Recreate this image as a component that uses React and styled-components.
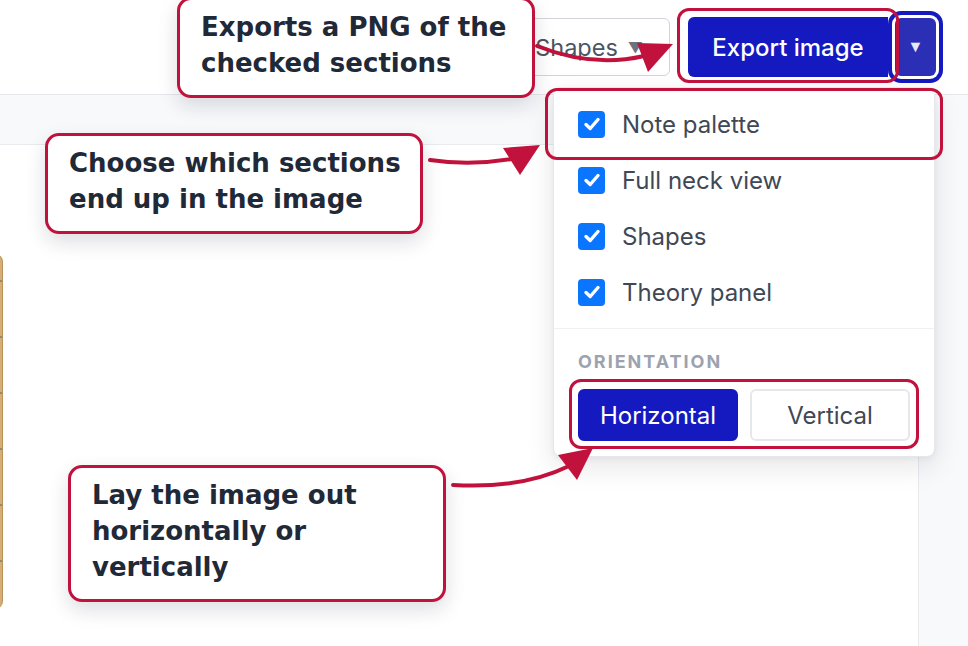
import styled, { createGlobalStyle } from "styled-components";

const GlobalStyle = createGlobalStyle`
  html, body {
    margin: 0;
    padding: 0;
    background: #f8f9fb;
    font-family: Inter, "Noto Sans", sans-serif;
    overflow: hidden;
  }
  * {
    box-sizing: border-box;
  }
`;

const RED = "#c0123c";
const BLUE = "#1419c0";

const Page = styled.div`
  position: relative;
  width: 968px;
  height: 646px;
  overflow: hidden;
  background: #f8f9fb;
`;

const Header = styled.header`
  height: 95px;
  background: #fff;
  border-bottom: 1px solid #e5e7eb;
  display: flex;
  align-items: center;
  justify-content: flex-end;
  padding-right: 32px;
  gap: 18px;
`;

const MenuButton = styled.button`
  height: 58px;
  padding: 0 26px 0 14px;
  border: 1px solid #d1d5db;
  border-radius: 6px;
  background: #fff;
  color: #4b5563;
  font-family: Inter, sans-serif;
  font-size: 23.5px;
  display: flex;
  align-items: center;
  gap: 10px;

  span {
    font-size: 15px;
    color: #6b7280;
  }
`;

const Split = styled.div`
  display: flex;
  align-items: center;
`;

const ExportButton = styled.button`
  width: 200px;
  height: 60px;
  border: none;
  border-radius: 6px 0 0 6px;
  background: ${BLUE};
  color: #fff;
  font-family: Inter, sans-serif;
  font-size: 24px;
  font-weight: 500;
`;

const ToggleButton = styled.button`
  width: 41px;
  height: 58px;
  margin-left: 7px;
  border: none;
  border-radius: 6px;
  background: #2a2fb5;
  color: #e8e9f6;
  font-size: 16px;
  box-shadow: 0 0 0 3px #fff, 0 0 0 7px ${BLUE};
`;

const Main = styled.main`
  display: flex;
  padding: 49px 49px 0 0;
`;

const Card = styled.section`
  flex: 1;
  margin-left: -24px;
  height: 530px;
  background: #fff;
  border: 1px solid #e8eaee;
  border-radius: 12px;
  padding-top: 109px;
`;

const Fretboard = styled.div`
  width: 26px;
  height: 355px;
  border-radius: 0 8px 8px 0;
  background-color: #d6ae74;
  border-right: 1px solid #b8925c;
  background-image: repeating-linear-gradient(
    to bottom,
    transparent 0 26px,
    #8d8a86 26px 28px,
    transparent 28px 56px
  );
`;

const Menu = styled.div`
  position: absolute;
  top: 87px;
  right: 33px;
  width: 382px;
  background: #fff;
  border: 1px solid #e5e7eb;
  border-radius: 8px;
  box-shadow: 0 10px 28px rgba(17, 24, 39, 0.1), 0 2px 6px rgba(17, 24, 39, 0.05);
  padding-top: 8px;
`;

const Item = styled.label`
  height: 56px;
  padding: 0 24px;
  display: flex;
  align-items: center;
  gap: 17px;
  font-size: 24px;
  color: #3f4856;
`;

const Check = styled.span`
  width: 27px;
  height: 27px;
  border-radius: 4px;
  background: #0a75ff;
  display: flex;
  align-items: center;
  justify-content: center;
`;

const Divider = styled.div`
  height: 1px;
  margin-top: 8px;
  background: #eef0f3;
`;

const Section = styled.div`
  padding: 21px 24px 15px;
`;

const Label = styled.div`
  font-size: 18px;
  line-height: 24px;
  font-weight: 700;
  letter-spacing: 0.11em;
  color: #9ca3af;
  margin-bottom: 15px;
`;

const Segments = styled.div`
  display: grid;
  grid-template-columns: 1fr 1fr;
  gap: 12px;
`;

const Segment = styled.button`
  height: 52px;
  border-radius: 6px;
  font-family: Inter, sans-serif;
  font-size: 24px;
  border: 2px solid ${({ $active }) => ($active ? BLUE : "#e5e7eb")};
  background: ${({ $active }) => ($active ? BLUE : "#fff")};
  color: ${({ $active }) => ($active ? "#fff" : "#3f4856")};
`;

const Ring = styled.div`
  position: absolute;
  border: 3px solid ${RED};
  border-radius: 12px;
  pointer-events: none;
`;

const Callout = styled.div`
  position: absolute;
  background: #fff;
  border: 3px solid ${RED};
  border-radius: 14px;
  padding: 9px 21px 14px;
  font-family: "DejaVu Sans", sans-serif;
  font-weight: 700;
  font-size: 26px;
  line-height: 36px;
  color: #1f2937;
  white-space: nowrap;
  box-shadow: 0 8px 20px rgba(17, 24, 39, 0.14);

  span {
    display: block;
  }
`;

const Arrows = styled.svg`
  position: absolute;
  inset: 0;
  pointer-events: none;
`;

const sections = ["Note palette", "Full neck view", "Shapes", "Theory panel"];

const rings = [
  { left: 677, top: 8, width: 222, height: 75 },
  { left: 545, top: 88, width: 398, height: 72 },
  { left: 569, top: 379, width: 350, height: 70 },
];

const callouts = [
  { left: 177, top: -3, width: 358, lines: ["Exports a PNG of the", "checked sections"] },
  { left: 45, top: 133, width: 378, lines: ["Choose which sections", "end up in the image"] },
  { left: 68, top: 465, width: 378, lines: ["Lay the image out", "horizontally or", "vertically"] },
];

const arrows = [
  { d: "M 537 46 Q 592 68 644 56", head: "637,43 673,44 648,72" },
  { d: "M 430 160 Q 470 166 512 159", head: "503,148 540,145 520,175" },
  { d: "M 453 485 Q 522 489 569 466", head: "558,455 593,448 577,480" },
];

const CheckIcon = () => (
  <svg width="20" height="20" viewBox="0 0 20 20">
    <path d="M4 10.5 L8.2 14.5 L16 5.5" fill="none" stroke="#fff" strokeWidth="3.4" strokeLinecap="round" strokeLinejoin="round" />
  </svg>
);

export default function App() {
  return (
    <Page>
      <GlobalStyle />
      <Header>
        <MenuButton>
          Shapes <span>▼</span>
        </MenuButton>
        <Split>
          <ExportButton>Export image</ExportButton>
          <ToggleButton>▼</ToggleButton>
        </Split>
      </Header>
      <Main>
        <Card>
          <Fretboard />
        </Card>
      </Main>

      <Menu>
        {sections.map((s) => (
          <Item key={s}>
            <Check>
              <CheckIcon />
            </Check>
            {s}
          </Item>
        ))}
        <Divider />
        <Section>
          <Label>ORIENTATION</Label>
          <Segments>
            <Segment $active>Horizontal</Segment>
            <Segment>Vertical</Segment>
          </Segments>
        </Section>
      </Menu>

      {rings.map((r, i) => (
        <Ring key={i} style={r} />
      ))}
      <Arrows width="968" height="646" viewBox="0 0 968 646">
        {arrows.map((a, i) => (
          <g key={i}>
            <path d={a.d} fill="none" stroke={RED} strokeWidth="4" strokeLinecap="round" />
            <polygon points={a.head} fill={RED} />
          </g>
        ))}
      </Arrows>
      {callouts.map((c) => (
        <Callout key={c.lines[0]} style={{ left: c.left, top: c.top, width: c.width }}>
          {c.lines.map((l) => (
            <span key={l}>{l}</span>
          ))}
        </Callout>
      ))}
    </Page>
  );
}
